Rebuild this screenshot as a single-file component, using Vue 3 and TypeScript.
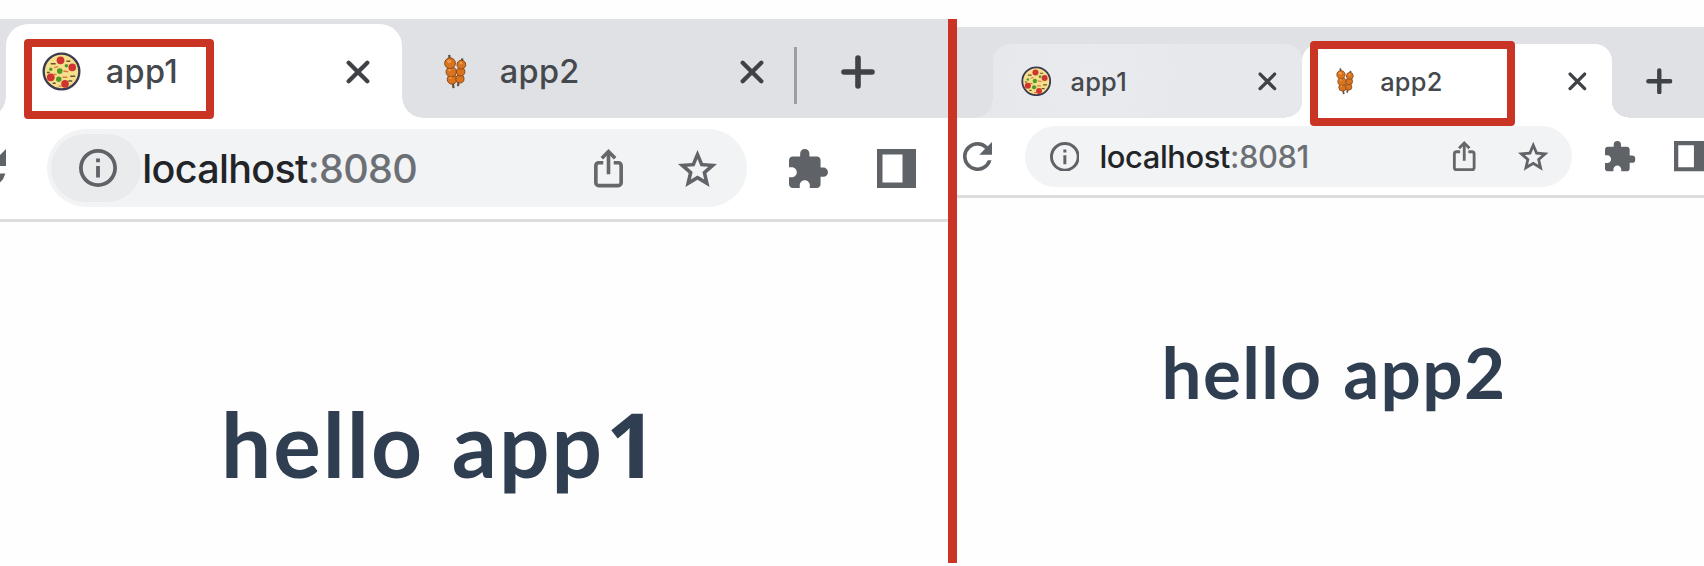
<script setup lang="ts">
interface Tab {
  title: string
  icon: 'pizza' | 'skewer'
}

interface Pane {
  side: 'left' | 'right'
  active: number
  port: string
  heading: string
  digit: string
}

const tabs: Tab[] = [
  { title: 'app1', icon: 'pizza' },
  { title: 'app2', icon: 'skewer' },
]

const panes: Pane[] = [
  { side: 'left', active: 0, port: ':8080', heading: 'hello app', digit: '1' },
  { side: 'right', active: 1, port: ':8081', heading: 'hello app', digit: '2' },
]
</script>

<template>
  <div class="stage">
    <svg class="defs" aria-hidden="true">
      <symbol id="pizza" viewBox="0 0 40 40">
        <circle cx="20" cy="20" r="18.3" fill="#f5df8c" stroke="#3d3b51" stroke-width="2.4" />
        <g fill="#cf3430">
          <circle cx="19" cy="8.5" r="4" /><circle cx="31" cy="15.8" r="3.9" />
          <circle cx="9" cy="26" r="4" /><circle cx="23.6" cy="32.7" r="3.9" />
        </g>
        <g fill="#4e9a27">
          <circle cx="18.2" cy="19.6" r="2.9" /><circle cx="17.2" cy="28" r="2.8" />
          <circle cx="25" cy="14" r="1.8" /><circle cx="9" cy="17.7" r="1.7" />
        </g>
        <path d="M9 12h5M25 9.5h4M29 24.9h5M11 32h3M27 29.8h4M5 21h3" stroke="#65552b" stroke-width="1.6" />
        <path d="M12.5 16l4-1M22 19.5l5 .8M21 26h5M12 22.5l3 1M17 35h3" stroke="#dd7940" stroke-width="1.5" />
      </symbol>
      <symbol id="skewer" viewBox="0 0 40 40">
        <path d="M13.5 3L18 37M27 6.5L22.5 35" stroke="#65503a" stroke-width="2.3" />
        <g fill="#d8741f" stroke="#874619" stroke-width="1">
          <circle cx="16.5" cy="28" r="5" /><circle cx="24.5" cy="27.5" r="4.2" />
          <circle cx="15.6" cy="20.3" r="5.3" /><circle cx="25.3" cy="20.2" r="4.4" />
          <circle cx="14.4" cy="11.5" r="5.5" /><circle cx="26" cy="13" r="4.5" />
        </g>
        <g fill="#f09a49">
          <circle cx="13.5" cy="9.6" r="2" /><circle cx="25.6" cy="11.3" r="1.5" />
          <circle cx="14" cy="18.5" r="1.3" /><circle cx="15" cy="26.5" r="1.2" />
        </g>
      </symbol>
      <symbol id="close" viewBox="0 0 24 24">
        <path d="M2.7 2.7l18.6 18.6M21.3 2.7l-18.6 18.6" stroke="#3f4347" stroke-width="4.3" stroke-linecap="round" />
      </symbol>
      <symbol id="plus" viewBox="0 0 34 34">
        <path d="M17 3v28M3 17h28" stroke="#3f4347" stroke-width="5.6" stroke-linecap="round" />
      </symbol>
      <symbol id="reload" viewBox="4 4 16 16">
        <path
          d="M17.65 6.35A7.958 7.958 0 0 0 12 4a8 8 0 1 0 7.73 10h-2.08A6 6 0 1 1 12 6c1.66 0 3.14.69 4.22 1.78L13 11h7V4l-2.35 2.35z"
          fill="#5f6368"
        />
      </symbol>
      <symbol id="info" viewBox="2 2 20 20">
        <path
          d="M11 7h2v2h-2zm0 4h2v6h-2zm1-9a10 10 0 1 0 0 20 10 10 0 0 0 0-20zm0 18a8 8 0 1 1 0-16 8 8 0 0 1 0 16z"
          fill="#5f6368"
        />
      </symbol>
      <symbol id="share" viewBox="0 0 39 41">
        <path
          d="M14 14.5H9.2a3 3 0 0 0-3 3V35.5a3 3 0 0 0 3 3h20.6a3 3 0 0 0 3-3V17.5a3 3 0 0 0-3-3H25M19.5 26.5V5"
          fill="none" stroke="#666768" stroke-width="3.8"
        />
        <path d="M12.5 9.7L19.5 2.7l7 7" fill="none" stroke="#666768" stroke-width="3.8" />
      </symbol>
      <symbol id="star" viewBox="2 2 20 19">
        <path
          d="M22 9.24l-7.19-.62L12 2 9.19 8.63 2 9.24l5.46 4.73L5.82 21 12 17.27 18.18 21l-1.63-7.03L22 9.24zM12 15.1l-3.4 2.05.9-3.9-3-2.62 3.98-.34L12 6.65l1.55 3.64 3.98.34-3 2.62.9 3.9L12 15.1z"
          fill="#606468"
        />
      </symbol>
      <symbol id="puzzle" viewBox="2 1 21 21">
        <path
          d="M20.5 11H19V7c0-1.1-.9-2-2-2h-4V3.5a2.5 2.5 0 0 0-5 0V5H4c-1.1 0-1.99.9-1.99 2v3.8H3.5c1.49 0 2.7 1.21 2.7 2.7s-1.21 2.7-2.7 2.7H2V20c0 1.1.9 2 2 2h3.8v-1.5c0-1.49 1.21-2.7 2.7-2.7s2.7 1.21 2.7 2.7V22H17c1.1 0 2-.9 2-2v-4h1.5a2.5 2.5 0 0 0 0-5z"
          fill="#5f6368"
        />
      </symbol>
      <symbol id="panel" viewBox="0 0 39 39">
        <path d="M0 0H39V39H0ZM5.5 5.5V33.5H25.5V5.5Z" fill="#5f6368" fill-rule="evenodd" />
      </symbol>
    </svg>

    <section v-for="pane in panes" :key="pane.side" class="pane" :class="pane.side">
      <header class="strip">
        <div
          v-for="(tab, i) in tabs"
          :key="tab.title"
          class="tab"
          :class="{ active: i === pane.active, hover: pane.side === 'right' && i === 0 }"
        >
          <svg class="icon"><use :href="'#' + tab.icon" /></svg>
          <span class="title">{{ tab.title }}</span>
          <svg class="close"><use href="#close" /></svg>
        </div>
        <i class="separator"></i>
        <svg class="plus"><use href="#plus" /></svg>
      </header>
      <nav class="toolbar">
        <svg class="icon reload"><use href="#reload" /></svg>
        <div class="omnibox">
          <span class="chip"><svg class="icon info"><use href="#info" /></svg></span>
          <span class="url">localhost<span class="port">{{ pane.port }}</span></span>
          <svg class="icon share"><use href="#share" /></svg>
          <svg class="icon star"><use href="#star" /></svg>
        </div>
        <svg class="icon puzzle"><use href="#puzzle" /></svg>
        <svg class="icon side-panel"><use href="#panel" /></svg>
      </nav>
      <main class="content">
        <h1>{{ pane.heading }}<span :class="{ plain: pane.digit === '1' }">{{ pane.digit }}</span></h1>
      </main>
    </section>

    <div class="divider"></div>
    <div class="mark mark-left"></div>
    <div class="mark mark-right"></div>
  </div>
</template>

<style>
body {
  margin: 0;
  background: #fefefe;
}
</style>

<style scoped>
.stage {
  position: relative;
  display: flex;
  width: 1704px;
  height: 566px;
  overflow: hidden;
  background: #fefefe;
  font-family: Inter, Roboto, 'Liberation Sans', sans-serif;
}
.defs {
  position: absolute;
  width: 0;
  height: 0;
}
.pane {
  box-sizing: border-box;
  overflow: hidden;
  flex: none;
}
.left {
  --u: 1px;
  width: 952px;
  padding-top: 19px;
}
.right {
  --u: 0.782px;
  width: 752px;
  padding-top: 27px;
}
svg {
  display: block;
  flex: none;
}
.icon {
  width: calc(var(--u) * 39);
  height: calc(var(--u) * 39);
}
.strip {
  display: flex;
  align-items: flex-end;
  box-sizing: border-box;
  background: #dfe1e5;
}
.left .strip {
  height: 99px;
  padding-left: 6px;
}
.right .strip {
  height: 90.5px;
  padding-left: 40.5px;
}
.tab {
  position: relative;
  display: flex;
  align-items: center;
  flex: none;
  box-sizing: border-box;
  width: calc(var(--u) * 396);
  height: calc(var(--u) * 94);
  padding: calc(var(--u) * 1) calc(var(--u) * 32) 0 calc(var(--u) * 36);
  border-radius: calc(var(--u) * 22) calc(var(--u) * 22) 0 0;
}
.left .tab:nth-child(2) {
  padding-right: 34px;
  padding-left: 34px;
}
.tab.hover {
  background: radial-gradient(circle at 32% 45%, #eaebee 0, #e6e8ec 45%);
}
.tab.active {
  z-index: 1;
  background: #fff;
}
.tab.active::before,
.tab.active::after,
.tab.hover::before {
  content: '';
  position: absolute;
  bottom: 0;
  width: calc(var(--u) * 21);
  height: calc(var(--u) * 21);
}
.tab.active::before {
  right: 100%;
  background: radial-gradient(circle calc(var(--u) * 21) at 0 0, transparent 97%, #fff 100%);
}
.tab.hover::before {
  right: 100%;
  background: radial-gradient(circle calc(var(--u) * 21) at 0 0, transparent 97%, #e6e8ec 100%);
}
.tab.active::after {
  left: 100%;
  background: radial-gradient(circle calc(var(--u) * 21) at 100% 0, transparent 97%, #fff 100%);
}
.title {
  margin-left: calc(var(--u) * 24.8);
  padding-top: calc(var(--u) * 2);
  font-size: calc(var(--u) * 32.5);
  font-weight: 450;
  line-height: 1;
  letter-spacing: calc(var(--u) * 0.3);
  color: #45484c;
}
.close {
  width: calc(var(--u) * 24);
  height: calc(var(--u) * 24);
  margin-left: auto;
}
.separator {
  width: 3px;
  height: 57px;
  margin: 0 0 14.5px -4px;
  background: #9b9ea2;
}
.right .separator {
  visibility: hidden;
}
.plus {
  width: calc(var(--u) * 34);
  height: calc(var(--u) * 34);
  margin: 0 0 calc(var(--u) * 29.5) calc(var(--u) * 45);
}
.left .plus {
  margin-left: 43.5px;
}
.toolbar {
  display: flex;
  align-items: center;
  box-sizing: border-box;
  height: calc(var(--u) * 103.5);
  border-bottom: calc(var(--u) * 3.9) solid #dcddde;
  background: #fff;
}
.left .reload {
  margin-left: -33px;
}
.right .reload {
  width: 29px;
  height: 29px;
  margin-right: 1px;
  margin-left: 11px;
}
.omnibox {
  display: flex;
  align-items: center;
  flex: none;
  box-sizing: border-box;
  width: calc(var(--u) * 700);
  height: calc(var(--u) * 78);
  margin: 0 calc(var(--u) * 42) 0 calc(var(--u) * 41);
  padding: 0 calc(var(--u) * 30.5) 0 calc(var(--u) * 4);
  border-radius: calc(var(--u) * 39);
  background: #f1f3f5;
}
.chip {
  display: flex;
  align-items: center;
  box-sizing: border-box;
  width: calc(var(--u) * 90);
  height: calc(var(--u) * 68);
  padding-left: calc(var(--u) * 27.5);
  border-radius: calc(var(--u) * 34);
}
.left .chip {
  background: #e9ebed;
}
.info {
  width: calc(var(--u) * 38);
  height: calc(var(--u) * 38);
}
.url {
  padding: calc(var(--u) * 3) 0 0 calc(var(--u) * 1.2);
  font-size: calc(var(--u) * 39.5);
  font-weight: 450;
  line-height: 1;
  letter-spacing: calc(var(--u) * -0.68);
  color: #222427;
}
.right .url {
  letter-spacing: -0.42px;
}
.port {
  color: #6c7074;
}
.share {
  margin-left: auto;
}
.star {
  margin-left: calc(var(--u) * 50);
}
.side-panel {
  margin-left: calc(var(--u) * 49);
}
h1 {
  margin: 0;
  font-family: Lato, 'Open Sans', sans-serif;
  font-weight: 700;
  line-height: 1;
  color: #2f3e50;
  white-space: nowrap;
}
.left h1 {
  padding: 177px 0 0 221px;
  font-size: 89px;
  letter-spacing: 2px;
  word-spacing: 4px;
}
.right h1 {
  padding: 137.5px 0 0 209.5px;
  font-size: 71px;
  letter-spacing: 1.4px;
  word-spacing: 2px;
}
.plain {
  margin-left: 2px;
  font-family: 'Open Sans', sans-serif;
  line-height: 0;
}
.divider {
  position: absolute;
  top: 19px;
  left: 948px;
  width: 8.5px;
  height: 544px;
  background: #ca3425;
}
.mark {
  position: absolute;
  z-index: 2;
  box-sizing: border-box;
  border: 8.5px solid #ca3425;
  border-radius: 4px;
}
.mark-left {
  top: 38.5px;
  left: 24px;
  width: 190px;
  height: 80.5px;
}
.mark-right {
  top: 40.5px;
  left: 1310px;
  width: 204.5px;
  height: 85.5px;
}
</style>
